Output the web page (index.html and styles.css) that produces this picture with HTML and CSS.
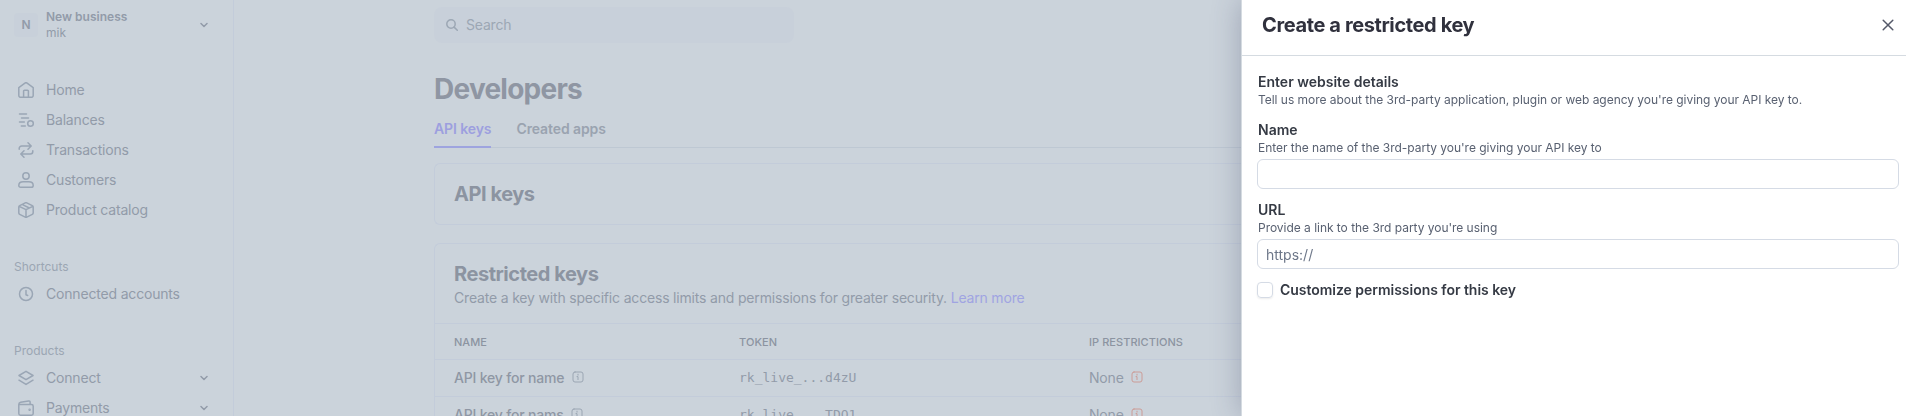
FILE: index.html
```html
<!DOCTYPE html>
<html lang="en">
<head>
  <meta charset="UTF-8">
  <meta name="viewport" content="width=device-width, initial-scale=1.0">
  <title>Developers - API keys</title>
  <link rel="stylesheet" href="styles.css">
</head>
<body>

  <div class="layout">
    <!-- Sidebar -->
    <nav class="sidebar">
      <div class="account">
        <span class="avatar">N</span>
        <div class="account-name">
          <strong>New business</strong>
          <span>mik</span>
        </div>
        <svg class="chevron" viewBox="0 0 8 8"><path d="M1 2.5l3 3 3-3"/></svg>
      </div>

      <ul class="nav-list">
        <li>
          <svg class="icon" viewBox="0 0 16 16"><path d="M.8 5.6 6.9 1.1a1.8 1.8 0 0 1 2.2 0l6.1 4.5v8a1.700 1.700 0 0 1-1.700 1.700h-11A1.700 1.700 0 0 1 .8 13.600zM5.600 15V9.100a.9.9 0 0 1 .9-.9h3a.9.9 0 0 1 .9.9V15"/></svg>
          <span>Home</span>
        </li>
        <li>
          <svg class="icon" viewBox="0 0 16 16"><path d="M1.500 1.900h7M3.500 5.900h7M1.500 9.900h4.800M3.300 13.900h4"/><circle cx="12.500" cy="11.500" r="2.800"/></svg>
          <span>Balances</span>
        </li>
        <li>
          <svg class="icon" viewBox="0 0 16 16"><path d="M1.200 7.200V6.500a2.500 2.500 0 0 1 2.500-2.500H13M10 .8 13.200 4 10 7.200M14.800 8.800v.7a2.500 2.500 0 0 1-2.500 2.500H3M6 8.800 2.800 12 6 15.200"/></svg>
          <span>Transactions</span>
        </li>
        <li>
          <svg class="icon" viewBox="0 0 16 16"><circle cx="8" cy="4" r="3.200"/><path d="M.8 13.400c0-2.400 2-3.700 4.400-3.700h5.600c2.400 0 4.400 1.300 4.400 3.700 0 1.100-.7 1.800-1.800 1.800H2.600c-1.100 0-1.800-.7-1.800-1.800z"/></svg>
          <span>Customers</span>
        </li>
        <li>
          <svg class="icon" viewBox="0 0 16 16"><path d="M7.200.9a1.700 1.700 0 0 1 1.600 0l5.500 2.800a1.600 1.600 0 0 1 .9 1.500v5.600a1.600 1.600 0 0 1-.9 1.500l-5.500 2.800a1.700 1.700 0 0 1-1.600 0l-5.500-2.800a1.600 1.600 0 0 1-.9-1.500V5.200a1.600 1.600 0 0 1 .9-1.500zM1.200 4.300 8 7.700l6.800-3.400M8 7.700V15M4.500 2.600l6.800 3.400"/></svg>
          <span>Product catalog</span>
        </li>
      </ul>

      <h2 class="nav-title">Shortcuts</h2>
      <ul class="nav-list">
        <li>
          <svg class="icon" viewBox="0 0 16 16"><circle cx="8" cy="8" r="6.500"/><path d="M8 4.500v4.200l1.700.8"/></svg>
          <span>Connected accounts</span>
        </li>
      </ul>

      <h2 class="nav-title">Products</h2>
      <ul class="nav-list">
        <li>
          <svg class="icon" viewBox="0 0 16 16"><path d="M8 1.300 15 5.500 8 9.700 1 5.500zM1 10.200l7 4.200 7-4.200"/></svg>
          <span>Connect</span>
          <svg class="chevron" viewBox="0 0 8 8"><path d="M1 2.500l3 3 3-3"/></svg>
        </li>
        <li>
          <svg class="icon" viewBox="0 0 16 16"><path d="M.8 4.500h12.700a1.700 1.700 0 0 1 1.700 1.700v7.300a1.700 1.700 0 0 1-1.700 1.700h-11a1.700 1.700 0 0 1-1.700-1.700zM.8 4.500c0-1.400.7-2 1.800-2.200L10.600.9c.9-.1 1.500.4 1.500 1.200v2.400"/><circle cx="11.600" cy="9.700" r=".5"/></svg>
          <span>Payments</span>
          <svg class="chevron" viewBox="0 0 8 8"><path d="M1 2.500l3 3 3-3"/></svg>
        </li>
      </ul>
    </nav>

    <!-- Page content -->
    <main class="content">
      <div class="search">
        <svg class="search-icon" viewBox="0 0 12 12"><circle cx="5" cy="5" r="4.200"/><path d="M8.100 8.100l3.200 3.200"/></svg>
        <span>Search</span>
      </div>

      <h1>Developers</h1>

      <div class="tabs">
        <a class="tab active">API keys</a>
        <a class="tab">Created apps</a>
      </div>

      <section class="card">
        <div class="card-header">
          <h3>API keys</h3>
        </div>
      </section>

      <section class="card">
        <div class="card-header">
          <h3>Restricted keys</h3>
          <p>Create a key with specific access limits and permissions for greater security. <a>Learn more</a></p>
        </div>
        <div class="row row-head">
          <span>NAME</span>
          <span>TOKEN</span>
          <span>IP RESTRICTIONS</span>
        </div>
        <div class="row">
          <span class="key-name">API key for name <svg class="info" viewBox="0 0 12 12"><rect x="1" y="1" width="10" height="10" rx="2"/><path d="M6 3.200v.9M5 5.600h1v3"/></svg></span>
          <code>rk_live_...d4zU</code>
          <span>None <svg class="info warn" viewBox="0 0 12 12"><rect x="1" y="1" width="10" height="10" rx="2"/><path d="M6 3.200v.9M5 5.600h1v3"/></svg></span>
        </div>
        <div class="row">
          <span class="key-name">API key for nams <svg class="info" viewBox="0 0 12 12"><rect x="1" y="1" width="10" height="10" rx="2"/><path d="M6 3.200v.9M5 5.600h1v3"/></svg></span>
          <code>rk_live_...TDO1</code>
          <span>None <svg class="info warn" viewBox="0 0 12 12"><rect x="1" y="1" width="10" height="10" rx="2"/><path d="M6 3.200v.9M5 5.600h1v3"/></svg></span>
        </div>
      </section>
    </main>
  </div>

  <!-- Drawer -->
  <aside class="drawer">
    <header class="drawer-header">
      <h2>Create a restricted key</h2>
      <svg class="close" viewBox="0 0 12 12"><path d="M1.200 1.200l9.600 9.600M10.800 1.200l-9.600 9.600"/></svg>
    </header>
    <form class="drawer-form">
      <div class="field intro">
        <h3>Enter website details</h3>
        <p>Tell us more about the 3rd-party application, plugin or web agency you're giving your API key to.</p>
      </div>
      <div class="field">
        <label for="name">Name</label>
        <p>Enter the name of the 3rd-party you're giving your API key to</p>
        <input type="text" id="name">
      </div>
      <div class="field">
        <label for="url">URL</label>
        <p>Provide a link to the 3rd party you're using</p>
        <input type="text" id="url" placeholder="https://">
      </div>
      <label class="check">
        <input type="checkbox">
        <span>Customize permissions for this key</span>
      </label>
    </form>
  </aside>

</body>
</html>
```
FILE: styles.css
```css
* {
  box-sizing: border-box;
}

body {
  margin: 0;
  height: 100vh;
  overflow: hidden;
  background-color: #cbd3db;
  color: #929ba9;
  font-family: Inter, "Liberation Sans", sans-serif;
  font-size: 14px;
  line-height: 20px;
}

h1, h2, h3, p, ul {
  margin: 0;
  padding: 0;
}

svg {
  fill: none;
  stroke: currentColor;
  stroke-width: 1.5;
  stroke-linecap: round;
  stroke-linejoin: round;
  flex-shrink: 0;
}

.layout {
  display: flex;
  height: 100vh;
  overflow: hidden;
  letter-spacing: -0.18px;
}

/* Sidebar */
.sidebar {
  width: 234px;
  flex-shrink: 0;
  padding: 9px 26px 0 14px;
  border-right: 1px solid #c3ccda;
}

.account {
  display: flex;
  align-items: center;
  height: 32px;
  margin-bottom: 34px;
  letter-spacing: 0;
}

.avatar {
  width: 24px;
  height: 24px;
  margin-right: 8px;
  border-radius: 4px;
  background-color: #c8d0da;
  font-size: 12px;
  font-weight: 600;
  line-height: 24px;
  text-align: center;
}

.account-name {
  display: flex;
  flex-direction: column;
  flex: 1;
  font-size: 12px;
  line-height: 16px;
}

.account-name strong {
  font-weight: 600;
}

.chevron {
  width: 8px;
  height: 8px;
  margin-right: -1px;
}

.nav-list {
  list-style: none;
}

.nav-list li {
  display: flex;
  align-items: center;
  height: 30px;
  padding-left: 4px;
}

.nav-list span {
  flex: 1;
}

.icon {
  width: 16px;
  height: 16px;
  margin-right: 12px;
  color: #9aa6b5;
}

.nav-title {
  margin-top: 34px;
  padding-bottom: 4px;
  font-size: 12px;
  font-weight: 400;
  line-height: 16px;
  letter-spacing: 0;
  color: #9ba6b3;
}

/* Page content */
.content {
  flex: 1;
  padding: 7px 0 0 200px;
}

.search {
  display: flex;
  align-items: center;
  width: 360px;
  height: 36px;
  padding-left: 12px;
  gap: 8px;
  border-radius: 8px;
  background-color: #c8d0da;
  color: #9ca7b4;
}

.search-icon {
  width: 12px;
  height: 12px;
}

h1 {
  margin-top: 28px;
  font-size: 28px;
  font-weight: 700;
  line-height: 36px;
  letter-spacing: -0.75px;
  color: #8f96a3;
}

.tabs {
  display: flex;
  gap: 25px;
  height: 41px;
  margin-bottom: 15px;
  padding-top: 12px;
  border-bottom: 1px solid #bec8d3;
  font-weight: 600;
  letter-spacing: -0.1px;
}

.tab {
  height: 29px;
  color: #9aa3b0;
}

.tab.active {
  border-bottom: 2px solid #9ea4df;
  color: #9d9fdf;
}

.card {
  margin-bottom: 18px;
  border: 1px solid #c3ccda;
  border-right: 0;
  border-radius: 6px 0 0 6px;
}

.card-header {
  padding: 16px 19px;
}

.card-header h3 {
  font-size: 20px;
  font-weight: 700;
  line-height: 28px;
  letter-spacing: -0.45px;
  color: #8c94a1;
}

.card-header p {
  margin-bottom: -1px;
}

.card-header a {
  color: #a0a4e2;
}

.row {
  display: grid;
  grid-template-columns: 285px 350px 1fr;
  align-items: center;
  height: 37px;
  padding-left: 19px;
  border-top: 1px solid #c3ccda;
}

.row-head {
  height: 36px;
  font-size: 11px;
  font-weight: 500;
  letter-spacing: 0.05px;
  color: #8c94a1;
}

.row code {
  font-family: "DejaVu Sans Mono", monospace;
  font-size: 13px;
  letter-spacing: 0;
}

.key-name {
  font-weight: 500;
  color: #8f97a4;
}

.info {
  width: 12px;
  height: 12px;
  margin-left: 4px;
  stroke-width: 1;
  color: #9ba6b3;
}

.info.warn {
  color: #cc9c97;
}

/* Drawer */
.drawer {
  position: fixed;
  top: 0;
  right: 0;
  bottom: 0;
  width: 665px;
  border-left: 1px solid #d5dbe1;
  background-color: #fff;
  box-shadow: 0 0 28px rgba(60, 66, 100, 0.32);
}

.drawer-header {
  display: flex;
  align-items: center;
  justify-content: space-between;
  height: 56px;
  padding: 0 12px 6px 20px;
  border-bottom: 1px solid #d5dbe1;
  color: #30313d;
}

.drawer-header h2 {
  font-size: 20px;
  font-weight: 700;
  line-height: 28px;
  letter-spacing: -0.38px;
}

.close {
  width: 12px;
  height: 12px;
  color: #545969;
}

.drawer-form {
  padding: 16px 7px 0 15px;
}

.field {
  display: flex;
  flex-direction: column;
  margin-bottom: 11px;
  color: #353a44;
}

.field.intro {
  margin-bottom: 12px;
}

.field h3,
.field label {
  padding-left: 1px;
  font-size: 14px;
  font-weight: 600;
  line-height: 20px;
}

.field p {
  padding-left: 1px;
  font-size: 12px;
  line-height: 16px;
  letter-spacing: -0.03px;
  color: #596171;
}

.field input {
  height: 30px;
  margin-top: 3px;
  padding: 0 8px;
  border: 1px solid #d5dbe5;
  border-radius: 6px;
  font: inherit;
}

.field input::placeholder {
  color: #6c7688;
}

.check {
  display: flex;
  align-items: center;
  gap: 7px;
  color: #353a44;
  font-weight: 600;
  letter-spacing: -0.03px;
}

.check input {
  appearance: none;
  width: 16px;
  height: 16px;
  margin: 0;
  border: 1px solid #d5dbe5;
  border-radius: 4px;
  box-shadow: 0 1px 2px rgba(0, 0, 0, 0.08);
}
```
